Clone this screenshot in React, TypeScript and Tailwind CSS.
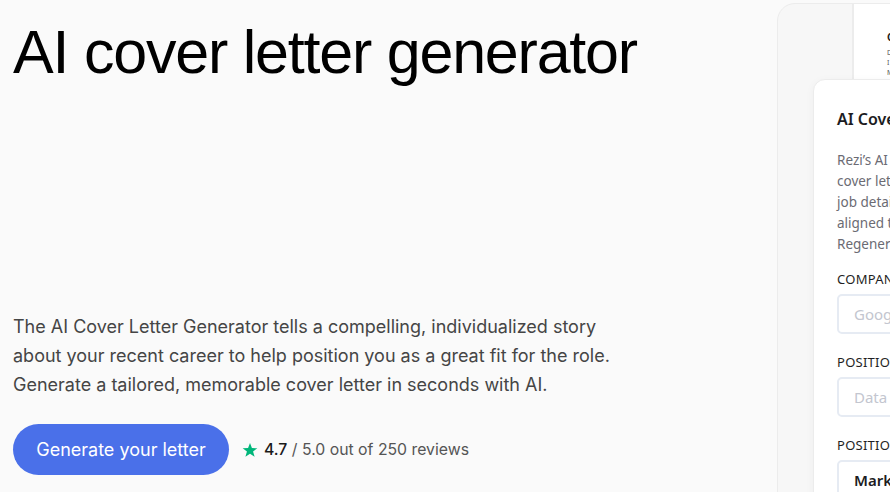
import React from "react"

function Star() {
  return (
    <svg width="16" height="16" viewBox="0 0 24 24" className="shrink-0">
      <path
        d="M12 1.5l2.9 7.6 8.1.3-6.4 5 2.3 7.9L12 17.7l-6.9 4.6 2.3-7.9-6.4-5 8.1-.3z"
        fill="#00b67a"
      />
    </svg>
  )
}

function Field({ label, placeholder, value }: { label: string; placeholder?: string; value?: string }) {
  return (
    <div className="flex flex-col">
      <div className="text-[13px] tracking-[0.02em] text-[#1f1f24] uppercase whitespace-nowrap leading-[16px]">{label}</div>
      <div className="mt-[7px] h-[40px] w-[200px] rounded-[5px] border-2 border-[#e6ebf3] bg-white flex items-center px-[15px]">
        {value ? (
          <span className="text-[15px] font-semibold text-[#1c1c22] whitespace-nowrap">{value}</span>
        ) : (
          <span className="text-[15px] text-[#c3c6cf] whitespace-nowrap">{placeholder}</span>
        )}
      </div>
    </div>
  )
}

const introLines = [
  "Rezi’s AI Cover Letter Generator creates a personalized",
  "cover letter in seconds based on your resume and the",
  "job details you provide, so every letter stays",
  "aligned to the role you are applying for.",
  "Regenerate or edit it anytime.",
]

export default function App() {
  return (
    <div className="w-[890px] h-[492px] overflow-hidden bg-[#fafafa] flex">
      {/* left hero */}
      <div className="w-[777px] shrink-0 pl-[13px] flex flex-col">
        <h1
          className="mt-[14px] text-[61px] leading-[76px] text-black tracking-[-0.02em] whitespace-nowrap"
          style={{ fontFamily: '"Liberation Sans", Arial, sans-serif' }}
        >
          AI cover letter generator
        </h1>
        <p
          className="mt-[222px] text-[18px] leading-[29px] text-[#454545] w-[628px]"
          style={{ fontFamily: "Inter, sans-serif" }}
        >
          The AI Cover Letter Generator tells a compelling, individualized story about your recent career to help
          position you as a great fit for the role. Generate a tailored, memorable cover letter in seconds with AI.
        </p>
        <div className="mt-[25px] flex items-center gap-[13px]" style={{ fontFamily: "Inter, sans-serif" }}>
          <button className="h-[51px] w-[216px] rounded-full bg-[#4a70e9] text-white text-[18px] flex items-center justify-center">
            Generate your letter
          </button>
          <div className="flex items-center gap-[6px] text-[15.8px] text-[#555]">
            <Star />
            <span>
              <span className="text-[#1a1a1a] font-medium">4.7</span> / 5.0 out of 250 reviews
            </span>
          </div>
        </div>
      </div>

      {/* right preview */}
      <div className="relative flex-1 mt-[3px]" style={{ fontFamily: '"Noto Sans", sans-serif' }}>
        <div className="h-[520px] w-[300px] rounded-tl-[18px] border border-[#ececec] bg-[#f7f7f7] flex overflow-hidden">
          <div className="w-[74px] shrink-0" />
          <div className="h-[77px] flex-1 border-l-2 border-[#ececec] bg-white pl-[33px] pt-[26px]">
            <div className="text-[10px] font-bold text-[#222] leading-[14px]">Cover</div>
            <div className="mt-[4px] text-[7px] leading-[10px] text-[#555]">
              <div>Dear</div>
              <div>I am</div>
              <div>My</div>
            </div>
          </div>
        </div>
        <div className="absolute left-[36px] top-[76px] w-[300px] h-[440px] rounded-tl-[12px] border border-[#ececec] bg-white shadow-[0_2px_10px_rgba(0,0,0,0.04)] pl-[23px] pt-[27px]">
          <div className="text-[16px] font-semibold text-[#1c1c22] leading-[24px] whitespace-nowrap">
            AI Cover Letter Generator
          </div>
          <p className="mt-[19px] text-[13.5px] leading-[21px] text-[#6b6b73]">
            {introLines.map((l) => (
              <span key={l} className="block whitespace-nowrap">
                {l}
              </span>
            ))}
          </p>
          <div className="mt-[16px] flex flex-col gap-[20px]">
            <Field label="Company name" placeholder="Google" />
            <Field label="Position title" placeholder="Data Scientist" />
            <Field label="Position type" value="Marketing" />
          </div>
        </div>
      </div>
    </div>
  )
}
